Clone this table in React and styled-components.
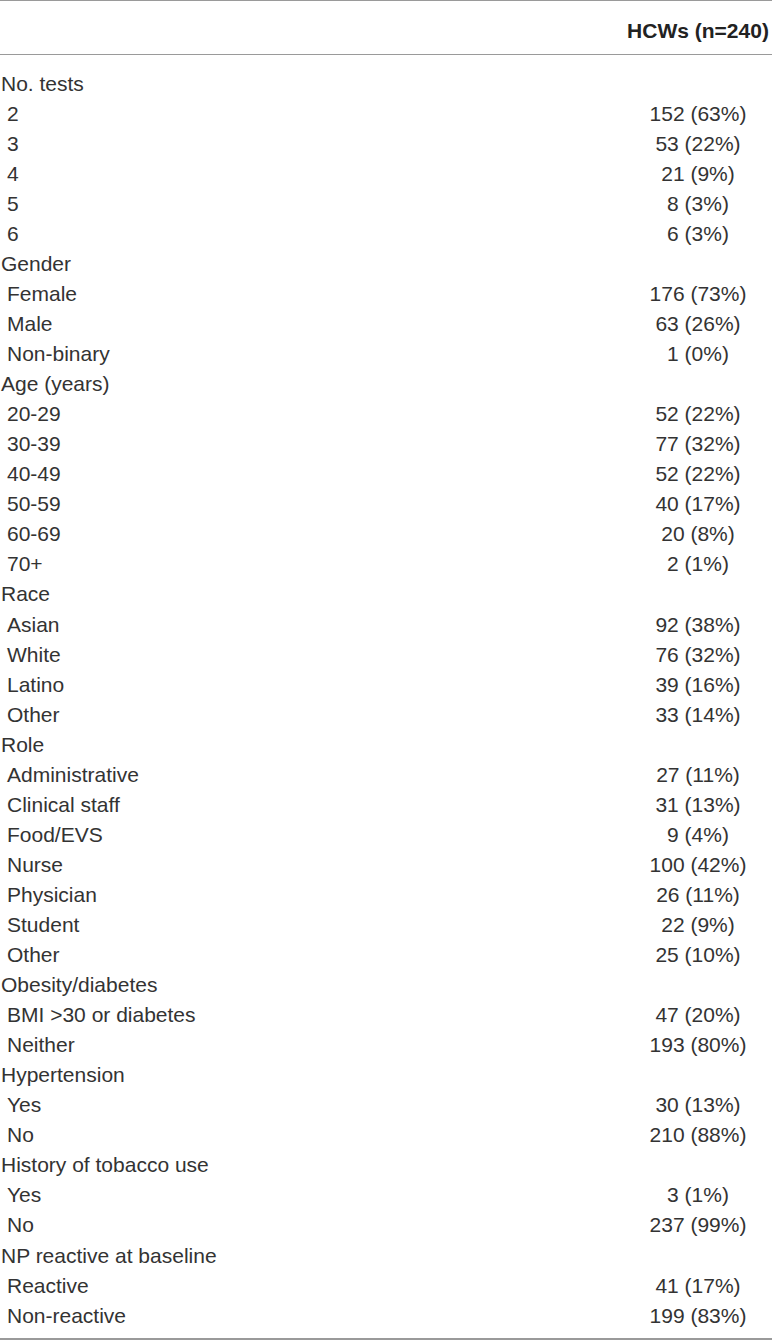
import React from "react";
import styled, { createGlobalStyle } from "styled-components";

const Global = createGlobalStyle`
  html, body { margin: 0; padding: 0; background: #fff; }
  body { font-family: "Liberation Sans", Arial, sans-serif; }
`;

const Table = styled.div`
  width: 772px;
  border-top: 1px solid #9a9a9a;
  border-bottom: 2px solid #9a9a9a;
  margin-bottom: 1px;
  color: #333;
  font-family: "Liberation Sans", Arial, sans-serif;
`;

const HeaderRow = styled.div`
  display: grid;
  grid-template-columns: 1fr 148px;
  height: 54px;
  box-sizing: border-box;
  padding-top: 18px;
  border-bottom: 1px solid #9a9a9a;
`;

const HeaderCell = styled.div`
  font-size: 21px;
  line-height: 24px;
  font-weight: 700;
  color: #222;
  text-align: center;
  white-space: nowrap;
`;

const Body = styled.div`
  padding: 13.7px 0 7px;
`;

const Row = styled.div`
  display: grid;
  grid-template-columns: 1fr 148px;
  height: 30.05px;
  font-size: 21px;
  line-height: 30.05px;
`;

const Label = styled.div`
  padding-left: ${(p) => (p.$sub ? "7px" : "1px")};
  white-space: nowrap;
`;

const Value = styled.div`
  text-align: center;
  white-space: nowrap;
`;

const groups = [
  ["No. tests", [["2", "152 (63%)"], ["3", "53 (22%)"], ["4", "21 (9%)"], ["5", "8 (3%)"], ["6", "6 (3%)"]]],
  ["Gender", [["Female", "176 (73%)"], ["Male", "63 (26%)"], ["Non-binary", "1 (0%)"]]],
  ["Age (years)", [["20-29", "52 (22%)"], ["30-39", "77 (32%)"], ["40-49", "52 (22%)"], ["50-59", "40 (17%)"], ["60-69", "20 (8%)"], ["70+", "2 (1%)"]]],
  ["Race", [["Asian", "92 (38%)"], ["White", "76 (32%)"], ["Latino", "39 (16%)"], ["Other", "33 (14%)"]]],
  ["Role", [["Administrative", "27 (11%)"], ["Clinical staff", "31 (13%)"], ["Food/EVS", "9 (4%)"], ["Nurse", "100 (42%)"], ["Physician", "26 (11%)"], ["Student", "22 (9%)"], ["Other", "25 (10%)"]]],
  ["Obesity/diabetes", [["BMI >30 or diabetes", "47 (20%)"], ["Neither", "193 (80%)"]]],
  ["Hypertension", [["Yes", "30 (13%)"], ["No", "210 (88%)"]]],
  ["History of tobacco use", [["Yes", "3 (1%)"], ["No", "237 (99%)"]]],
  ["NP reactive at baseline", [["Reactive", "41 (17%)"], ["Non-reactive", "199 (83%)"]]],
];

export default function App() {
  return (
    <>
      <Global />
      <Table>
        <HeaderRow>
          <div />
          <HeaderCell>HCWs (n=240)</HeaderCell>
        </HeaderRow>
        <Body>
          {groups.map(([title, items]) => (
            <React.Fragment key={title}>
              <Row>
                <Label>{title}</Label>
                <Value />
              </Row>
              {items.map(([l, v], i) => (
                <Row key={title + i}>
                  <Label $sub>{l}</Label>
                  <Value>{v}</Value>
                </Row>
              ))}
            </React.Fragment>
          ))}
        </Body>
      </Table>
    </>
  );
}
